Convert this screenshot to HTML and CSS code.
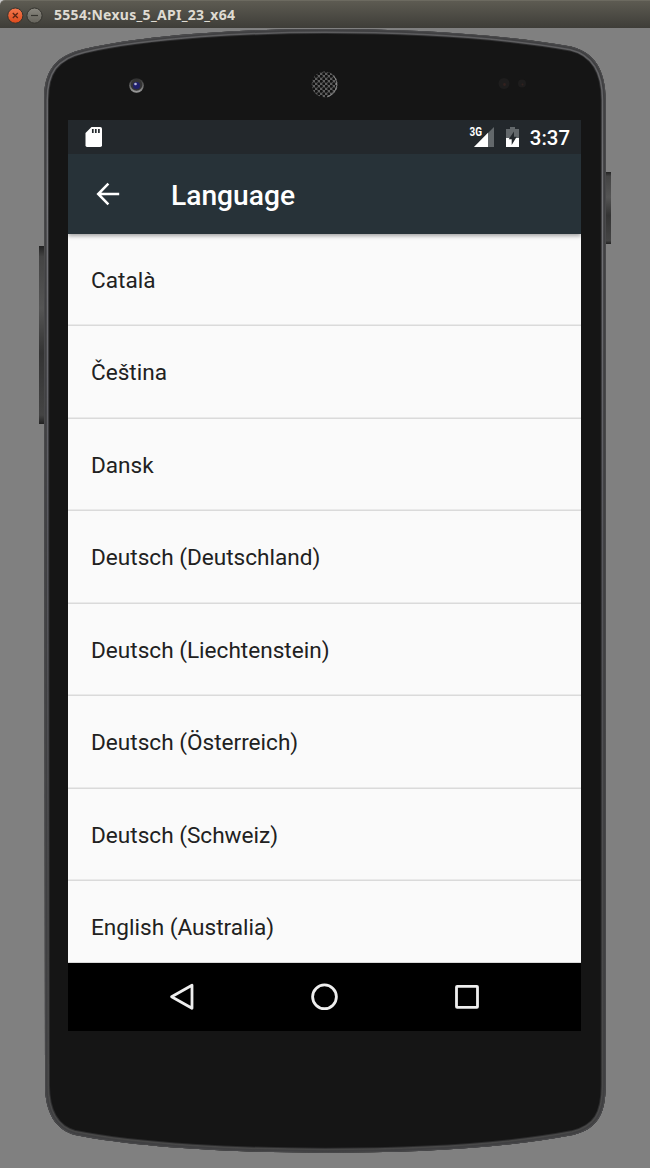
FILE: index.html
```html
<!DOCTYPE html>
<html lang="en">
<head>
<meta charset="utf-8">
<title>5554:Nexus_5_API_23_x64</title>
<link rel="stylesheet" href="styles.css">
</head>
<body>
<div class="window">
  <header class="titlebar">
    <svg class="controls" width="44" height="28" viewBox="0 0 44 28">
      <defs>
        <linearGradient id="close" x1="0" y1="0" x2="0" y2="1"><stop offset="0" stop-color="#f4794f"/><stop offset="1" stop-color="#de4a1b"/></linearGradient>
        <linearGradient id="min" x1="0" y1="0" x2="0" y2="1"><stop offset="0" stop-color="#8a8880"/><stop offset="1" stop-color="#65635b"/></linearGradient>
      </defs>
      <circle cx="15.3" cy="14.6" r="7.6" fill="url(#close)" stroke="#34332e"/>
      <path d="M12.8 12l5 5M17.8 12l-5 5" stroke="#5b2614" stroke-width="1.3"/>
      <circle cx="34.5" cy="14.6" r="7.6" fill="url(#min)" stroke="#34332e"/>
      <path d="M31 14.5h7" stroke="#35342f" stroke-width="1.2"/>
    </svg>
    <span class="window-title">5554:Nexus_5_API_23_x64</span>
  </header>
  <main class="device">
    <svg class="chassis" width="650" height="1140" viewBox="0 28 650 1140">
      <defs>
        <path id="shell" d="M44 100C44 72 54 56 84 49C150 34 250 29 325 29C410 29 500 34 571 46.5C594 52 605.7 70 605.7 100V1085C605.7 1115 597 1129 573 1135C500 1149 410 1152.7 325 1152.7C240 1152.7 140 1148 75 1135C56 1130 45 1113 45 1085Z"/>
        <clipPath id="shell-clip"><use href="#shell"/></clipPath>
        <linearGradient id="rim" x1="0" y1="0" x2="0" y2="1"><stop offset="0" stop-color="#5c5c5e"/><stop offset=".15" stop-color="#747478"/><stop offset=".45" stop-color="#58585e"/><stop offset=".8" stop-color="#4a4a4b"/><stop offset="1" stop-color="#484848"/></linearGradient>
        <linearGradient id="key" x1="0" y1="0" x2="0" y2="1"><stop offset="0" stop-color="#222"/><stop offset=".06" stop-color="#444"/><stop offset=".35" stop-color="#555"/><stop offset=".6" stop-color="#343434"/><stop offset=".95" stop-color="#444"/><stop offset="1" stop-color="#222"/></linearGradient>
        <linearGradient id="lens" x1="0" y1="0" x2="0" y2="1"><stop offset="0" stop-color="#2c2c2c"/><stop offset="1" stop-color="#a0a0a0"/></linearGradient>
        <pattern id="mesh" width="5" height="5" patternUnits="userSpaceOnUse"><rect width="5" height="5" fill="#5e5e5e"/><circle cx="1.25" cy="1.25" r="1.5" fill="#111"/><circle cx="3.75" cy="3.75" r="1.5" fill="#111"/></pattern>
      </defs>
      <rect x="39" y="246" width="6" height="178" fill="url(#key)"/>
      <rect x="605" y="172" width="6" height="72" fill="url(#key)"/>
      <g clip-path="url(#shell-clip)" fill="none">
        <use href="#shell" fill="#151515" stroke="#2c2c2d" stroke-width="10"/>
        <use href="#shell" stroke="url(#rim)" stroke-width="8"/>
        <use href="#shell" stroke="#404042" stroke-width="5"/>
        <use href="#shell" stroke="#4b4b4d" stroke-width="1.6"/>
      </g>
      <circle cx="136.5" cy="85.5" r="7.3" fill="url(#lens)"/>
      <circle cx="136.5" cy="85" r="5.8" fill="#333"/>
      <circle cx="136.5" cy="85.5" r="3.6" fill="#20206a"/>
      <circle cx="135.5" cy="84" r="1.3" fill="#b5b5d8"/>
      <circle cx="324.7" cy="84.4" r="13" fill="url(#mesh)"/>
      <path d="M334 76.5a12.8 12.8 0 0 1-7 20.4" fill="none" stroke="#999" stroke-width=".8"/>
      <circle cx="504" cy="83.5" r="5.5" fill="#1e1d1d"/><circle cx="504.5" cy="84.5" r="1.4" fill="#33221f"/>
      <circle cx="522" cy="83.5" r="4" fill="#1e1d1d"/><circle cx="522.5" cy="84.5" r="1" fill="#33221f"/>
    </svg>
    <div class="screen">
      <div class="statusbar">
        <svg class="sd" width="18" height="22" viewBox="0 0 18 22"><path d="M6.5 1H15.2Q17 1 17 2.8V19.2Q17 21 15.2 21H2Q.5 21 .5 19.2V7Z" fill="#fff"/><path d="M7.8 3v4M10.8 3v4M13.9 3v4" stroke="#23282c" stroke-width="1.7"/></svg>
        <svg class="signal" width="52" height="22" viewBox="0 0 52 22">
          <text x="0.5" y="10.3" class="network" textLength="12.5" lengthAdjust="spacingAndGlyphs">3G</text>
          <path d="M25 1V21H5Z" fill="#63686b"/><path d="M19 6.8V21H5Z" fill="#fff"/>
          <path d="M37 3H41V1H46V3H50V21H37Z" fill="#63686b"/><path d="M37 12H50V21H37Z" fill="#fff"/>
          <path d="M45 5.5L39.7 13.3H42.7V19L47.7 10.8H45Z" fill="#23282c"/>
        </svg>
        <span class="clock">3:37</span>
      </div>
      <div class="appbar">
        <svg class="back" width="24" height="24" viewBox="0 0 24 24"><path d="M12.4 1.6L2.2 12L12.4 22.4M2.2 12H23.2" fill="none" stroke="#fff" stroke-width="2.5"/></svg>
        <h1 class="title">Language</h1>
      </div>
      <ul class="languages">
        <li class="language">Català</li>
        <li class="language">Čeština</li>
        <li class="language">Dansk</li>
        <li class="language">Deutsch (Deutschland)</li>
        <li class="language">Deutsch (Liechtenstein)</li>
        <li class="language">Deutsch (Österreich)</li>
        <li class="language">Deutsch (Schweiz)</li>
        <li class="language">English (Australia)</li>
      </ul>
      <nav class="navbar">
        <svg width="28" height="28" viewBox="0 0 28 28"><path d="M24 2.2V25.3L3.6 13.8Z"/></svg>
        <svg width="28" height="28" viewBox="0 0 28 28"><circle cx="13.5" cy="13.8" r="11.9"/></svg>
        <svg width="28" height="28" viewBox="0 0 28 28"><rect x="3.5" y="3.4" width="21" height="21" rx=".6"/></svg>
      </nav>
    </div>
  </main>
</div>
</body>
</html>
```
FILE: styles.css
```css
* { box-sizing: border-box; }
body { margin: 0; background: #c9c9c9; font-family: Roboto, sans-serif; }
.window { width: 650px; height: 1168px; display: flex; flex-direction: column; overflow: hidden; }
.titlebar { height: 28px; display: flex; align-items: center; gap: 10px; background: linear-gradient(#5d5b52, #3e3d38); border-top: 1px solid #6c6a60; border-radius: 5px 0 0 0; }
.controls { display: block; }
.window-title { font: 700 14px/28px "Noto Sans", sans-serif; letter-spacing: .29px; color: #dfdbd2; white-space: nowrap; }
.device { position: relative; flex: 1; background: #808080; padding: 92px 69px 0 68px; }
.chassis { position: absolute; inset: 0; }
.screen { position: relative; height: 911px; display: flex; flex-direction: column; background: #fafafa; }
.statusbar { height: 34px; flex: none; display: flex; align-items: center; padding: 0 11px 0 17px; background: #23282c; color: #fff; }
.signal { margin-left: auto; }
.network { font: 700 12px Roboto, sans-serif; fill: #fff; }
.clock { margin-left: 8.5px; padding-top: 2px; font-size: 20.4px; font-weight: 500; line-height: 32px; }
.appbar { position: relative; height: 80px; flex: none; display: flex; align-items: center; padding-left: 28px; gap: 51px; background: #273238; color: #fff; box-shadow: 0 2px 4px rgba(0, 0, 0, .35); clip-path: inset(0 0 -8px 0); }
.title { margin: 0; padding-top: 3px; font-size: 28.2px; font-weight: 500; line-height: 36px; }
.languages { flex: 1; min-height: 0; margin: 0; padding: 0; list-style: none; overflow: hidden; border-bottom: 1px solid #d8d8d8; }
.language { height: 92.5px; padding: 1px 23px 0; font-size: 22.6px; line-height: 91px; color: #212121; box-shadow: inset 0 -1.5px #dadada; white-space: nowrap; }
.language:first-child { height: 92.4px; }
.navbar { height: 68px; flex: none; display: flex; align-items: center; justify-content: center; gap: 114.5px; background: #000; }
.navbar svg { fill: none; stroke: #eee; stroke-width: 2.8; stroke-linejoin: round; }
```
